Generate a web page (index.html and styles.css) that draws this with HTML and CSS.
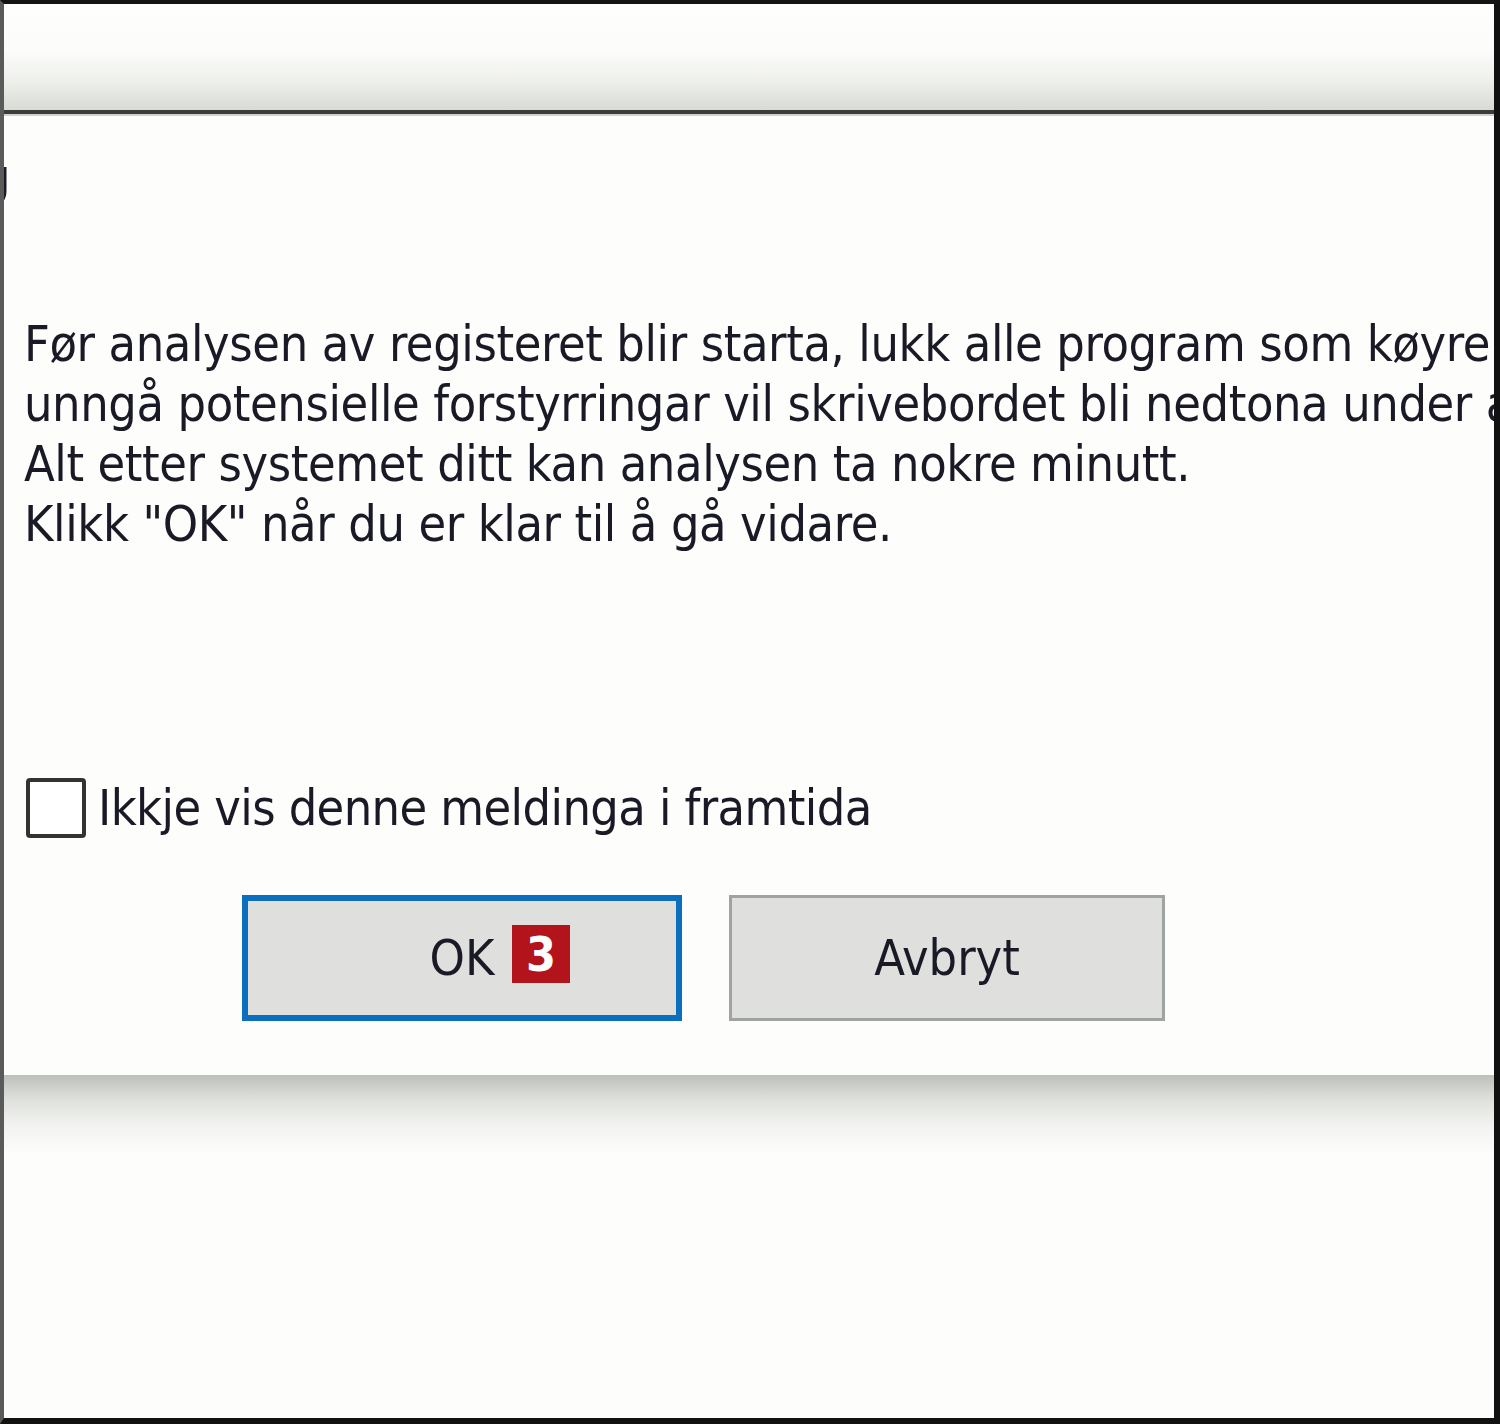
FILE: index.html
```html
<!DOCTYPE html>
<html lang="nn">
<head>
    <meta charset="UTF-8">
    <title>Registeranalyse</title>
    <link rel="stylesheet" href="styles.css">
</head>
<body>
    <div class="window">
        <div class="titlebar"></div>

        <div class="content">
            <div class="stub"><span>g</span></div>

            <div class="message">
                <p>Før analysen av registeret blir starta, lukk alle program som køyrer.</p>
                <p>unngå potensielle forstyrringar vil skrivebordet bli nedtona under analysen.</p>
                <p>Alt etter systemet ditt kan analysen ta nokre minutt.</p>
                <p>Klikk "OK" når du er klar til å gå vidare.</p>
            </div>

            <label class="check-row">
                <span class="checkbox"></span>
                <span class="check-label">Ikkje vis denne meldinga i framtida</span>
            </label>

            <div class="buttons">
                <button class="btn btn-default">OK<span class="badge">3</span></button>
                <button class="btn">Avbryt</button>
            </div>
        </div>

        <div class="footer"></div>
    </div>
</body>
</html>
```

FILE: styles.css
```css
* {
    margin: 0;
    padding: 0;
    box-sizing: border-box;
}

html, body {
    height: 100%;
    overflow: hidden;
}

body {
    font-family: 'DejaVu Sans Condensed', 'DejaVu Sans', sans-serif;
    background-color: #fdfdfb;
    color: #191a26;
}

.window {
    height: 1424px;
    display: flex;
    flex-direction: column;
    background: #fdfdfb;
    border-top: 4px solid #141414;
    border-left: 4px solid #5a5a5a;
    border-right: 6px solid #111;
    border-bottom: 6px solid #111;
    overflow: hidden;
}

.titlebar {
    height: 110px;
    flex-shrink: 0;
    background: linear-gradient(to bottom, #fefefd 0%, #fcfcfa 45%, #eef0ec 72%, #d7dad5 100%);
    border-bottom: 4px solid #3c3c3c;
    box-shadow: 0 2px 0 #cfd1cd;
}

.content {
    flex-shrink: 0;
    padding-left: 20px;
    overflow: hidden;
    white-space: nowrap;
}

.stub {
    height: 50px;
    margin-top: 38px;
    font-size: 50px;
    line-height: 50px;
}

.stub span {
    display: inline-block;
    margin-left: -42px;
}

.message {
    margin-top: 112px;
    font-size: 50px;
    line-height: 60px;
    letter-spacing: -0.4px;
}

.check-row {
    display: flex;
    align-items: center;
    gap: 12px;
    margin-top: 224px;
    height: 60px;
    font-size: 50px;
    letter-spacing: -0.6px;
}

.checkbox {
    width: 60px;
    height: 60px;
    margin-left: 2px;
    border: 4px solid #333;
    border-radius: 4px;
    background: #fff;
}

.buttons {
    display: flex;
    gap: 47px;
    margin-top: 57px;
    padding-left: 218px;
}

.btn {
    position: relative;
    width: 436px;
    height: 126px;
    background: #dfe0dd;
    border: 3px solid #a0a4a0;
    font-family: inherit;
    font-size: 50px;
    color: #191a26;
}

.btn-default {
    width: 440px;
    border: 6px solid #0b6fbd;
}

.badge {
    position: absolute;
    left: 264px;
    top: 24px;
    width: 58px;
    height: 58px;
    background: #b3131b;
    color: #fff;
    font-weight: bold;
    font-size: 48px;
    line-height: 58px;
    text-align: center;
}

.footer {
    flex: 1;
    margin-top: 54px;
    background: linear-gradient(to bottom, #bcc0bb 0px, #dfe1dd 25px, #f2f3f0 50px, #fdfdfb 80px, #fdfdfb 100%);
}
```
